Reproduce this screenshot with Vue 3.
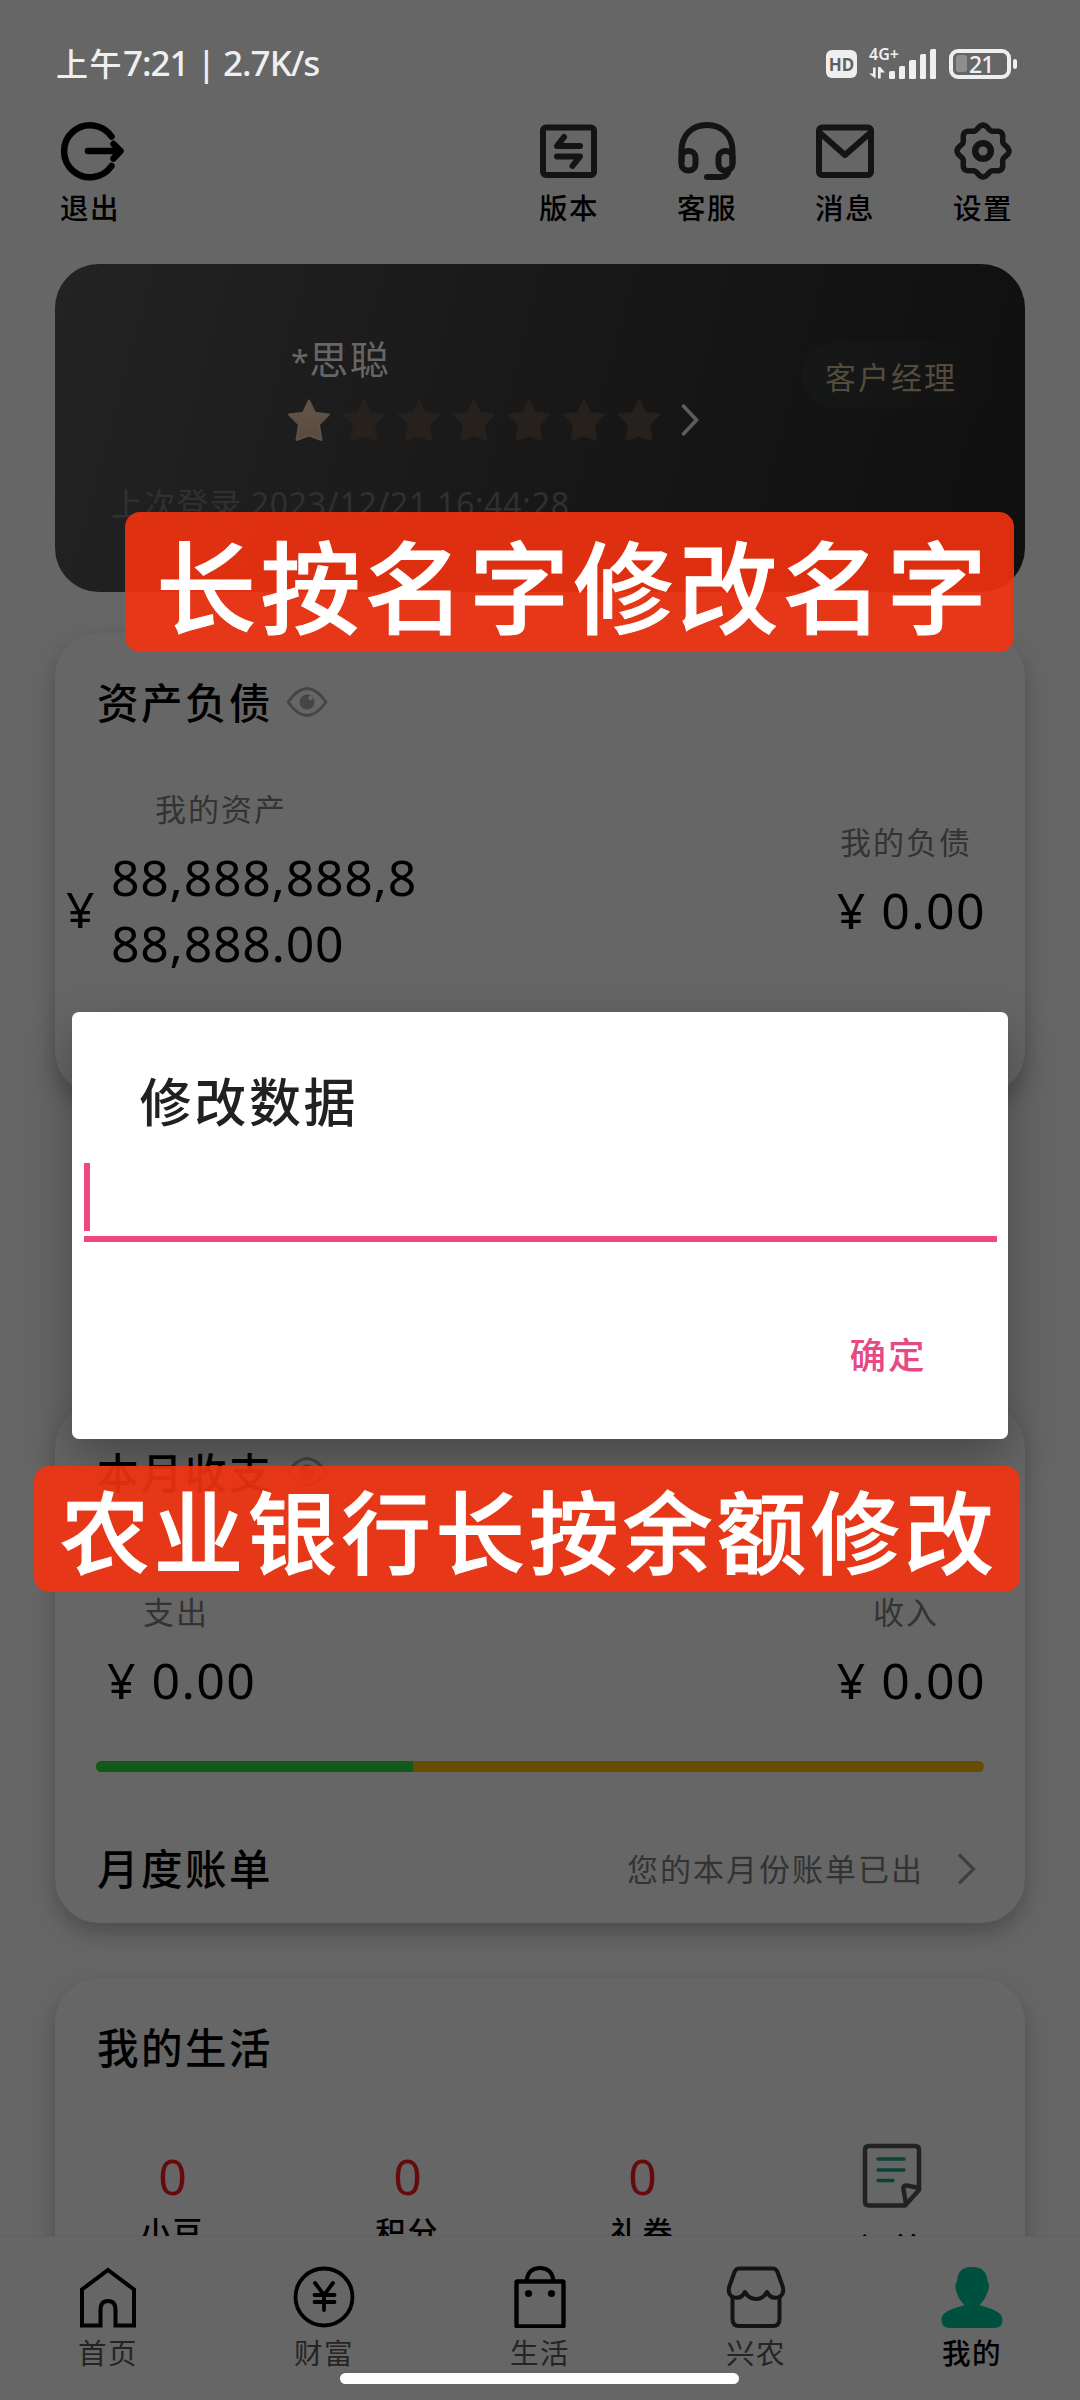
<script setup>
const gear = Array.from({ length: 96 }, (_, i) => {
  const t = (i / 96) * Math.PI * 2
  const r = 23.8 + 2.2 * Math.cos(8 * t)
  return `${(30 + r * Math.cos(t)).toFixed(2)},${(30 + r * Math.sin(t)).toFixed(2)}`
}).join(' ')

const stars = [true, false, false, false, false, false, false]
const signal = [8, 13, 19, 25, 30]
const tools = [
  { id: 'version', label: '版本' },
  { id: 'service', label: '客服' },
  { id: 'message', label: '消息' },
  { id: 'settings', label: '设置' },
]
const counters = [
  { label: '小豆', value: 0 },
  { label: '积分', value: 0 },
  { label: '礼券', value: 0 },
]
const tabs = [
  { id: 'home', label: '首页' },
  { id: 'wealth', label: '财富' },
  { id: 'life', label: '生活' },
  { id: 'farm', label: '兴农' },
  { id: 'me', label: '我的', active: true },
]
const spentShare = 35.7
</script>

<template>
  <div class="phone">
    <main class="scroll">
      <header class="status">
        <div class="clock">上午<span class="lat">7:21 | 2.7K/s</span></div>
        <div class="status-icons">
          <span class="hd">HD</span>
          <div class="net">
            <div class="net-left">
              <span class="gen">4G+</span>
              <svg class="updown" width="16" height="12" viewBox="0 0 16 12"><path d="M4 0.5h2.6V11.500L0 6.500H4zM9 0h2.200L16 5.500H11.700V11.500H9z" fill="#efefef" /></svg>
            </div>
            <div class="bars"><i v-for="h in signal" :key="h" :style="{ height: h + 'px' }"></i></div>
          </div>
          <div class="battery"><b></b><span>21</span></div>
          <div class="cap"></div>
        </div>
      </header>

      <nav class="toolbar">
        <div class="tool exit">
          <svg width="66" height="60" viewBox="0 0 66 60" fill="none" stroke="#000" stroke-linecap="round" stroke-linejoin="round">
            <path d="M51.500 15.500A26 26 0 1 0 51.500 45" stroke-width="6.500" />
            <path d="M28 30H59M53.500 23L60.500 30L53.500 37.500" stroke-width="6.500" />
          </svg>
          <span>退出</span>
        </div>
        <div class="tools">
          <div v-for="t in tools" :key="t.id" class="tool">
            <svg width="60" height="60" viewBox="0 0 60 60" fill="none" stroke="#141414" stroke-width="6" stroke-linecap="round" stroke-linejoin="round">
              <template v-if="t.id === 'version'">
                <rect x="4" y="6.500" width="51" height="47.500" rx="3" />
                <path d="M41 25H18L25 16M18 35.500H41L33.500 45" />
              </template>
              <template v-else-if="t.id === 'service'">
                <path d="M4.500 40V30C4.500 14 15 4 30 4S55.500 14 55.500 30V42" />
                <rect x="4.500" y="30" width="14" height="19.500" rx="6.500" />
                <rect x="41.500" y="30" width="14" height="19.500" rx="6.500" />
                <path d="M52 48C51 54 48 56 44 56H30" />
              </template>
              <template v-else-if="t.id === 'message'">
                <rect x="4" y="6.500" width="52" height="47.500" rx="3" />
                <path d="M5 12L30 34L55 12" />
              </template>
              <template v-else>
                <polygon :points="gear" stroke-width="5.500" />
                <circle cx="30" cy="30" r="7.800" stroke-width="6.500" />
              </template>
            </svg>
            <span>{{ t.label }}</span>
          </div>
        </div>
      </nav>

      <section class="profile">
        <div class="profile-top">
          <div class="identity">
            <div class="name"><span class="mask">*</span>思聪</div>
            <div class="stars">
              <svg v-for="(on, i) in stars" :key="i" width="42" height="42" viewBox="0 0 42 42">
                <defs>
                  <linearGradient id="starFill" x1="0" y1="0" x2="0" y2="1">
                    <stop offset="0" stop-color="#63564c" />
                    <stop offset="1" stop-color="#594a3d" />
                  </linearGradient>
                </defs>
                <path d="M21 1.500L27 13.800L41 15.500L31 25.600L33.500 41L21 36.500L8.500 41L11 25.600L1 15.500L15 13.800Z" :fill="on ? 'url(#starFill)' : '#27211d'" :stroke="on ? '#5e5146' : '#27211d'" stroke-width="2" stroke-linejoin="round" />
              </svg>
              <svg class="more" width="20" height="36" viewBox="0 0 20 36"><path d="M2.500 3L16.500 18L2.500 33" fill="none" stroke="#5c5c5c" stroke-width="3.600" /></svg>
            </div>
          </div>
          <div class="manager">客户经理</div>
        </div>
        <div class="login">上次登录 2023/12/21 16:44:28</div>
      </section>

      <section class="card assets">
        <h2>资产负债
          <svg class="eye" width="42" height="30" viewBox="0 0 42 30"><path d="M2 15Q21 -12 40 15Q21 42 2 15Z" fill="none" stroke="#454545" stroke-width="2.800" stroke-linejoin="round" /><circle cx="21" cy="15" r="7.500" fill="#454545" /><circle cx="24.500" cy="11" r="2.200" fill="#666" /></svg>
        </h2>
        <div class="asset-body">
          <div class="asset-left">
            <div class="label">我的资产</div>
            <div class="asset-row">
              <span class="money">¥</span>
              <span class="money total">88,888,888,8<br />88,888.00</span>
            </div>
          </div>
          <div class="figure">
            <div class="label">我的负债</div>
            <div class="money">¥ 0.00</div>
          </div>
        </div>
      </section>

      <section class="card month">
        <h2>本月收支
          <svg class="eye" width="42" height="30" viewBox="0 0 42 30"><path d="M2 15Q21 -12 40 15Q21 42 2 15Z" fill="none" stroke="#454545" stroke-width="2.800" stroke-linejoin="round" /><circle cx="21" cy="15" r="7.500" fill="#454545" /><circle cx="24.500" cy="11" r="2.200" fill="#666" /></svg>
        </h2>
        <div class="flows">
          <div class="figure">
            <div class="label">支出</div>
            <div class="money">¥ 0.00</div>
          </div>
          <div class="figure">
            <div class="label">收入</div>
            <div class="money">¥ 0.00</div>
          </div>
        </div>
        <div class="ratio"><i :style="{ width: spentShare + '%' }"></i></div>
        <div class="bill">
          <h2>月度账单</h2>
          <span class="label">您的本月份账单已出</span>
          <svg width="20" height="34" viewBox="0 0 20 34"><path d="M2 2.500L16.500 17L2 31.500" fill="none" stroke="#404040" stroke-width="3.200" /></svg>
        </div>
      </section>

      <section class="card living">
        <h2>我的生活</h2>
        <div class="counters">
          <div v-for="c in counters" :key="c.label" class="counter">
            <strong>{{ c.value }}</strong>
            <span>{{ c.label }}</span>
          </div>
          <div class="orders">
            <svg width="60" height="66" viewBox="0 0 60 66" fill="none" stroke-linecap="round" stroke-linejoin="round">
              <path d="M43 62.500H7Q3 62.500 3 58.500V7Q3 3 7 3H53Q57 3 57 7V47Z" stroke="#222" stroke-width="4.500" />
              <path d="M44 61L41.500 46Q41 42 45 42.500L57 45" stroke="#222" stroke-width="4.500" />
              <path d="M16 16H42M16 27H42M16 37.500H31" stroke="#0b4136" stroke-width="3.400" />
            </svg>
            <span>订单</span>
          </div>
        </div>
      </section>
    </main>

    <footer class="tabs">
      <div v-for="t in tabs" :key="t.id" class="tab" :class="{ active: t.active }">
        <svg width="62" height="62" viewBox="0 0 62 62" fill="none" stroke="#000" stroke-width="4">
          <path v-if="t.id === 'home'" d="M31 4L57 23.500V59.500H38.500V44Q38.500 35 31 35T23.500 44V59.500H5V23.500Z" />
          <template v-else-if="t.id === 'wealth'">
            <circle cx="31" cy="31" r="28.500" stroke-width="3.800" />
            <path d="M22 17L31 29L40 17M31 29V44M21.500 29H41.500M21.500 36H41.500" stroke-width="3.800" stroke-linecap="round" />
          </template>
          <template v-else-if="t.id === 'life'">
            <rect x="7.500" y="15.500" width="47" height="45" rx="1" stroke-width="4.400" />
            <path d="M17.500 15Q19 2 31 2T44.500 15" />
            <circle cx="19.500" cy="27.500" r="3.600" fill="#000" stroke="none" />
            <circle cx="42.500" cy="27.500" r="3.600" fill="#000" stroke="none" />
          </template>
          <g v-else-if="t.id === 'farm'" stroke="#141414" stroke-linejoin="round">
            <path d="M14 2.500H48Q51 2.500 52.500 6L57.500 20Q60 28 54 31Q46 34 42 26Q38 33 31 33T20 26Q16 34 8 31Q2 28 4.500 20L9.500 6Q11 2.500 14 2.500Z" />
            <path d="M7.500 31V53Q7.500 60 14 60H48Q54.500 60 54.500 53V31" />
          </g>
          <path v-else d="M31 1C42 1 46 7 46.500 15Q49.500 19 46.500 26C44.500 32 42 36 38.500 39C46 42 61.500 44 61.500 54Q61.500 62 53 62H9Q0.500 62 0.500 54C0.500 44 16 42 23.500 39C20 36 17.500 32 15.500 26Q13 19 16 15C16.500 7 20 1 31 1Z" fill="#005040" stroke="none" />
        </svg>
        <span>{{ t.label }}</span>
      </div>
    </footer>

    <div class="dialog">
      <div class="dialog-title">修改数据</div>
      <div class="field"><i></i></div>
      <div class="dialog-actions">确定</div>
    </div>
    <div class="tip tip-name">长按名字修改名字</div>
    <div class="tip tip-balance">农业银行长按余额修改</div>
    <div class="home-bar"></div>
  </div>
</template>

<style>
body { margin: 0; background: #666; }
</style>

<style scoped>
* { box-sizing: border-box; }
.phone {
  position: relative;
  width: 1080px;
  height: 2400px;
  overflow: hidden;
  display: flex;
  flex-direction: column;
  background: #666;
  color: #000;
  font-family: "Noto Sans", "Noto Sans CJK SC", sans-serif;
}
.scroll { flex: none; height: 2236px; overflow: hidden; }
svg { display: block; flex: none; }

.status {
  height: 118px;
  padding: 9px 63px 0 56px;
  display: flex;
  justify-content: space-between;
  align-items: center;
  color: #efefef;
}
.clock { font-size: 32px; letter-spacing: 1.5px; font-weight: 500; line-height: 40px; white-space: nowrap; }
.lat { font-size: 35px; letter-spacing: -1px; }
.status-icons { display: flex; align-items: center; height: 32px; }
.hd {
  width: 31px; height: 28px; border-radius: 6px; background: #efefef; color: #5f5f5f;
  font: 700 17px/29px "Noto Sans", sans-serif; text-align: center;
}
.net { display: flex; height: 32px; margin-left: 12px; }
.net-left { width: 20px; display: flex; flex-direction: column; justify-content: space-between; }
.gen { font-size: 16px; line-height: 12px; font-weight: 600; white-space: nowrap; }
.updown { margin-bottom: 1px; }
.bars { display: flex; align-items: flex-end; gap: 4px; padding-bottom: 1px; }
.bars i { width: 6.2px; background: #efefef; border-radius: 2px 1px 1px 1px; }
.battery {
  display: flex; align-items: center; width: 62px; height: 30px; margin-left: 13px;
  border: 4px solid #efefef; border-radius: 9px; padding-left: 3px;
}
.battery b { width: 11px; height: 17px; border-radius: 3px; background: #8e8e8e; }
.battery span { font-size: 23px; line-height: 22px; margin-left: 2px; font-weight: 500; letter-spacing: -0.8px; }
.cap { width: 4px; height: 10px; border-radius: 2px; background: #efefef; margin-left: 2px; }

.toolbar { display: flex; justify-content: space-between; padding: 3px 62px 0 60px; }
.tools { display: flex; gap: 78px; margin-right: 5px; }
.tool { width: 60px; display: flex; flex-direction: column; align-items: center; }
.exit { align-items: flex-start; width: 66px; }
.tool span { margin-top: 12px; font-size: 28.500px; letter-spacing: 1.500px; line-height: 30px; font-weight: 500; white-space: nowrap; }

.profile {
  height: 328px; margin: 41px 55px 0; border-radius: 44px;
  background: linear-gradient(105deg, #232323 0%, #191919 45%, #0f0f0f 100%);
}
.profile-top { display: flex; justify-content: space-between; padding: 0 25px 0 233px; }
.identity { padding-top: 72px; }
.name { height: 46px; font-size: 39px; line-height: 46px; letter-spacing: 1.500px; color: #666; padding-left: 3px; }
.mask { font-size: 32px; letter-spacing: 0.500px; }
.stars { display: flex; align-items: center; gap: 13px; margin-top: 17px; }
.more { margin-left: 7px; }
.manager {
  margin-top: 78px; width: 198px; height: 67px; padding-left: 23px; border-radius: 34px;
  background: linear-gradient(90deg, #161717, rgba(15, 15, 15, 0));
  font-size: 31px; letter-spacing: 2px; line-height: 70px; color: #544b3c;
}
.login { margin: 43px 0 0 56px; font-size: 32px; letter-spacing: 0.700px; line-height: 40px; color: #303030; white-space: nowrap; }

.card {
  margin: 0 55px; border-radius: 44px; background: #666;
  box-shadow: 0 10px 22px rgba(0, 0, 0, 0.25);
}
.assets { margin-top: 41px; height: 462px; padding-top: 50px; }
.month { margin-top: 308px; height: 520px; padding-top: 50px; }
.living { margin-top: 55px; height: 420px; padding-top: 50px; }
h2 {
  margin: 0 0 0 42px; display: flex; align-items: center;
  font-size: 41.500px; letter-spacing: 2.500px; line-height: 40px; font-weight: 500;
}
.eye { margin-left: 13px; margin-bottom: 2px; }
.label { font-size: 31px; letter-spacing: 2px; line-height: 40px; color: #333; }
.money { font-size: 50px; letter-spacing: 1.400px; line-height: 66px; white-space: nowrap; }
.total { letter-spacing: 0.700px; position: relative; top: 1px; }

.asset-body { display: flex; justify-content: space-between; align-items: center; padding: 66px 39px 0 11px; }
.asset-left .label { margin-left: 89px; }
.asset-row { display: flex; align-items: center; gap: 15px; margin-top: 14px; }
.figure { display: flex; flex-direction: column; align-items: center; }
.figure .label { padding-right: 11px; }
.figure .money { margin-top: 15px; }

.flows { display: flex; justify-content: space-between; padding: 99px 39px 0 52px; }
.ratio { height: 11px; margin: 48px 41px 0; border-radius: 6px; overflow: hidden; background: #664d00; }
.ratio i { display: block; height: 100%; background: #14591c; }
.bill { display: flex; align-items: center; height: 40px; margin-top: 77px; padding-right: 48px; }
.bill .label { margin-left: auto; margin-right: 33px; }

.counters { display: flex; padding-top: 75px; }
.counter { width: 235px; display: flex; flex-direction: column; align-items: center; margin-top: 8px; }
.counter strong { font-size: 50px; line-height: 50px; font-weight: 400; color: #660a0c; }
.counter span, .orders span { font-size: 30px; letter-spacing: 2px; line-height: 40px; font-weight: 500; }
.counter span { margin-top: 11px; }
.orders { flex: 1; display: flex; flex-direction: column; align-items: center; padding-right: 2px; }
.orders span { margin-top: 19px; }

.tabs { height: 164px; display: flex; padding-top: 29px; background: #666; border-top: 1px solid #616161; position: relative; }
.tab { flex: 1; display: flex; flex-direction: column; align-items: center; color: #242424; }
.tab span { margin-top: 10px; font-size: 28.500px; letter-spacing: 1.500px; line-height: 30px; }
.tab.active { color: #000; font-weight: 500; }

.dialog {
  position: absolute; left: 72px; top: 1012px; width: 936px; height: 427px;
  padding: 64px 11.500px 0; border-radius: 7px; background: #fff;
  box-shadow: 0 20px 50px rgba(0, 0, 0, 0.3);
}
.dialog-title { margin-left: 56px; font-size: 52px; letter-spacing: 2.700px; line-height: 52px; font-weight: 500; color: #212121; }
.field { height: 79px; margin-top: 35px; border-bottom: 6px solid #ef4783; }
.field i { display: block; width: 6px; height: 68px; background: #ef4783; }
.dialog-actions { margin-top: 93px; padding-right: 70px; text-align: right; font-size: 36.500px; letter-spacing: 2px; line-height: 40px; font-weight: 500; color: #e84985; }

.tip {
  position: absolute; border-radius: 15px; background: rgba(244, 51, 15, 0.9);
  color: #fff; white-space: nowrap; font-weight: 500; -webkit-text-stroke: 1px #fff;
}
.tip-name { left: 125px; top: 512px; width: 889px; height: 140px; padding-left: 31px; font-size: 100px; letter-spacing: 4.400px; line-height: 151px; }
.tip-balance { left: 34px; top: 1466px; width: 986px; height: 126px; padding-left: 26px; font-size: 89.500px; letter-spacing: 4.300px; line-height: 133px; }
.home-bar { position: absolute; left: 340px; top: 2373px; width: 399px; height: 11px; border-radius: 6px; background: #fff; }
</style>
